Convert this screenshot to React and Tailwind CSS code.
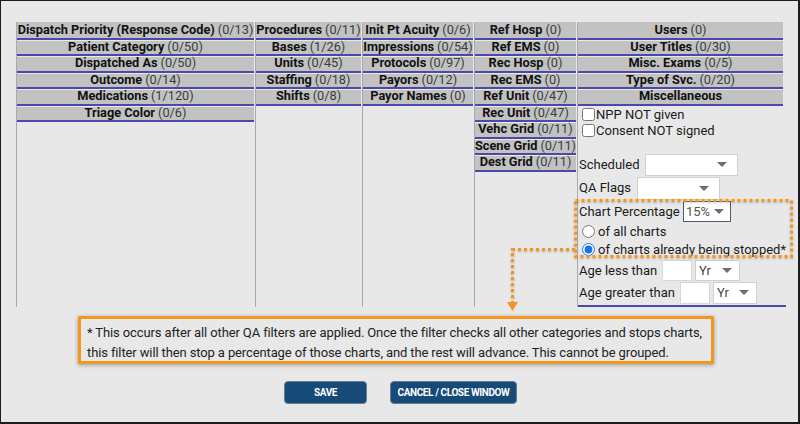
import React from "react";

const Cell = ({ name, count, first }) => (
  <div
    className={
      first
        ? "h-[14.5px] pt-[1px] box-content border-b-2 border-[#4a4aa6] bg-[#c2c2c2] mb-px mr-px flex items-center justify-center whitespace-nowrap text-[12.75px] leading-none text-[#111]"
        : "h-[13.5px] box-content border-b-2 border-[#4a4aa6] bg-[#c2c2c2] mb-px mr-px flex items-center justify-center whitespace-nowrap text-[12.75px] leading-none text-[#111]"
    }
  >
    <span className="font-bold">{name}</span>
    {count !== undefined && <span className="ml-[3px] text-[#3c3c3c]">{count}</span>}
  </div>
);

const Tri = () => (
  <svg width="10" height="5" viewBox="0 0 10 5" className="shrink-0">
    <path d="M0 0H10L5 5Z" fill="#6e6e6e" />
  </svg>
);

export default function App() {
  return (
    <div className="w-[800px] h-[424px] bg-[#e8e8e8] border-l border-t border-r-2 border-b-2 border-[#1c1c1c] relative overflow-hidden font-['Roboto',sans-serif]">
      <div className="pt-[21px] pl-[15px]">
        <div className="flex h-[285px]">
          {/* col 1 */}
          <div className="w-[239px] border-l border-[#a9a9a9] flex flex-col">
            <Cell first name="Dispatch Priority (Response Code)" count="(0/13)" />
            <Cell name="Patient Category" count="(0/50)" />
            <Cell name="Dispatched As" count="(0/50)" />
            <Cell name="Outcome" count="(0/14)" />
            <Cell name="Medications" count="(1/120)" />
            <Cell name="Triage Color" count="(0/6)" />
          </div>
          {/* col 2 */}
          <div className="w-[107px] border-l border-[#a9a9a9] flex flex-col">
            <Cell first name="Procedures" count="(0/11)" />
            <Cell name="Bases" count="(1/26)" />
            <Cell name="Units" count="(0/45)" />
            <Cell name="Staffing" count="(0/18)" />
            <Cell name="Shifts" count="(0/8)" />
          </div>
          {/* col 3 */}
          <div className="w-[112px] border-l border-[#a9a9a9] flex flex-col">
            <Cell first name="Init Pt Acuity" count="(0/6)" />
            <Cell name="Impressions" count="(0/54)" />
            <Cell name="Protocols" count="(0/97)" />
            <Cell name="Payors" count="(0/12)" />
            <Cell name="Payor Names" count="(0)" />
          </div>
          {/* col 4 */}
          <div className="w-[103px] border-l border-[#a9a9a9] flex flex-col">
            <Cell first name="Ref Hosp" count="(0)" />
            <Cell name="Ref EMS" count="(0)" />
            <Cell name="Rec Hosp" count="(0)" />
            <Cell name="Rec EMS" count="(0)" />
            <Cell name="Ref Unit" count="(0/47)" />
            <Cell name="Rec Unit" count="(0/47)" />
            <Cell name="Vehc Grid" count="(0/11)" />
            <Cell name="Scene Grid" count="(0/11)" />
            <Cell name="Dest Grid" count="(0/11)" />
          </div>
          {/* col 5 */}
          <div className="w-[209px] border-l border-[#a9a9a9] flex flex-col">
            <div className="flex flex-col border-b-2 border-[#4a4aa6] h-[285px] text-[13px] text-[#1a1a1a] leading-none whitespace-nowrap">
              <div className="mr-[2px]">
                <Cell first name="Users" count="(0)" />
                <Cell name="User Titles" count="(0/30)" />
                <Cell name="Misc. Exams" count="(0/5)" />
                <Cell name="Type of Svc." count="(0/20)" />
                <Cell name="Miscellaneous" />
              </div>
              <label className="h-[15px] flex items-center pl-[4px]">
                <input type="checkbox" className="w-[13px] h-[13px] m-0 mr-[1px]" />
                <span>NPP NOT given</span>
              </label>
              <label className="h-[18px] flex items-center pl-[4px]">
                <input type="checkbox" className="w-[13px] h-[13px] m-0 mr-[1px]" />
                <span>Consent NOT signed</span>
              </label>
              <div className="h-[14px]" />
              <div className="h-[22px] flex items-center pl-[1px]">
                <span className="w-[66px]">Scheduled</span>
                <div className="w-[93px] h-[22px] bg-white border border-[#d0d0d0] flex items-center justify-end pr-[10px]">
                  <Tri />
                </div>
              </div>
              <div className="h-[23px] mt-px flex items-center pl-[1px]">
                <span className="w-[58px] -mt-[2px]">QA Flags</span>
                <div className="w-[83px] h-[23px] bg-white border border-[#d0d0d0] flex items-center justify-end pr-[10px]">
                  <Tri />
                </div>
              </div>
              <div className="h-[21px] mt-px flex items-center pl-[1px]">
                <span className="w-[104px]">Chart Percentage</span>
                <div className="w-[48px] h-[21px] bg-white border border-[#4f5b68] flex items-center justify-between pl-[2px] pr-[6px] text-[#555]">
                  <span>15%</span>
                  <Tri />
                </div>
              </div>
              <label className="h-[18px] mt-px flex items-center pl-[4px]">
                <input type="radio" name="cp" className="w-[13px] h-[13px] m-0 mr-[3px] accent-[#1a73e8]" />
                <span>of all charts</span>
              </label>
              <label className="h-[17px] flex items-center pl-[4px]">
                <input type="radio" name="cp" defaultChecked className="w-[13px] h-[13px] m-0 mr-[3px] accent-[#1a73e8]" />
                <span>of charts already being stopped*</span>
              </label>
              <div className="h-[21px] mt-[2px] flex items-center pl-[1px]">
                <span className="w-[83px]">Age less than</span>
                <div className="w-[30px] h-[21px] bg-white border border-[#d8d8d8]" />
                <div className="w-[45px] h-[21px] ml-[3px] bg-white border border-[#d0d0d0] flex items-center justify-between pl-[3px] pr-[7px] text-[#444]">
                  <span>Yr</span>
                  <Tri />
                </div>
              </div>
              <div className="h-[22px] mt-px flex items-center pl-[1px]">
                <span className="w-[101px]">Age greater than</span>
                <div className="w-[30px] h-[22px] bg-white border border-[#d8d8d8]" />
                <div className="w-[44px] h-[22px] ml-[3px] bg-white border border-[#d0d0d0] flex items-center justify-between pl-[3px] pr-[7px] text-[#444]">
                  <span>Yr</span>
                  <Tri />
                </div>
              </div>
            </div>
          </div>
        </div>
      </div>

      <div className="ml-[77px] mt-[9px] w-[636px] h-[48px] border-[3px] border-[#f5961f] shadow-[0_1px_4px_rgba(0,0,0,0.35)] px-[6px] pt-[4px] text-[13px] leading-[20px] text-[#222] tracking-[-0.12px]">
        <p className="whitespace-nowrap">* This occurs after all other QA filters are applied. Once the filter checks all other categories and stops charts,</p>
        <p className="whitespace-nowrap">this filter will then stop a percentage of those charts, and the rest will advance. This cannot be grouped.</p>
      </div>

      <div className="flex justify-center gap-[23px] mt-[17px] pl-[2px]">
        <button className="w-[83px] h-[23px] rounded-[4px] bg-[#164a78] border border-[#6a7c8e] text-white text-[10px] font-bold tracking-[-0.4px]">
          SAVE
        </button>
        <button className="w-[127px] h-[23px] rounded-[4px] bg-[#164a78] border border-[#6a7c8e] text-white text-[10px] font-bold tracking-[-0.4px]">
          CANCEL / CLOSE WINDOW
        </button>
      </div>

      <svg className="absolute left-[-1px] top-[-1px] pointer-events-none" width="800" height="424" viewBox="0 0 800 424">
        <defs>
          <filter id="sh" x="-10%" y="-10%" width="120%" height="130%">
            <feDropShadow dx="0" dy="1" stdDeviation="1.2" floodColor="#000" floodOpacity="0.3" />
          </filter>
        </defs>
        <g filter="url(#sh)" stroke="#f5961f" strokeWidth="3" strokeDasharray="3 3" fill="none">
          <rect x="575.5" y="200.5" width="216" height="56" />
          <path d="M575 249.5H512.5V303" />
        </g>
        <path d="M507 302H518L512.5 311Z" fill="#f5961f" />
      </svg>
    </div>
  );
}
